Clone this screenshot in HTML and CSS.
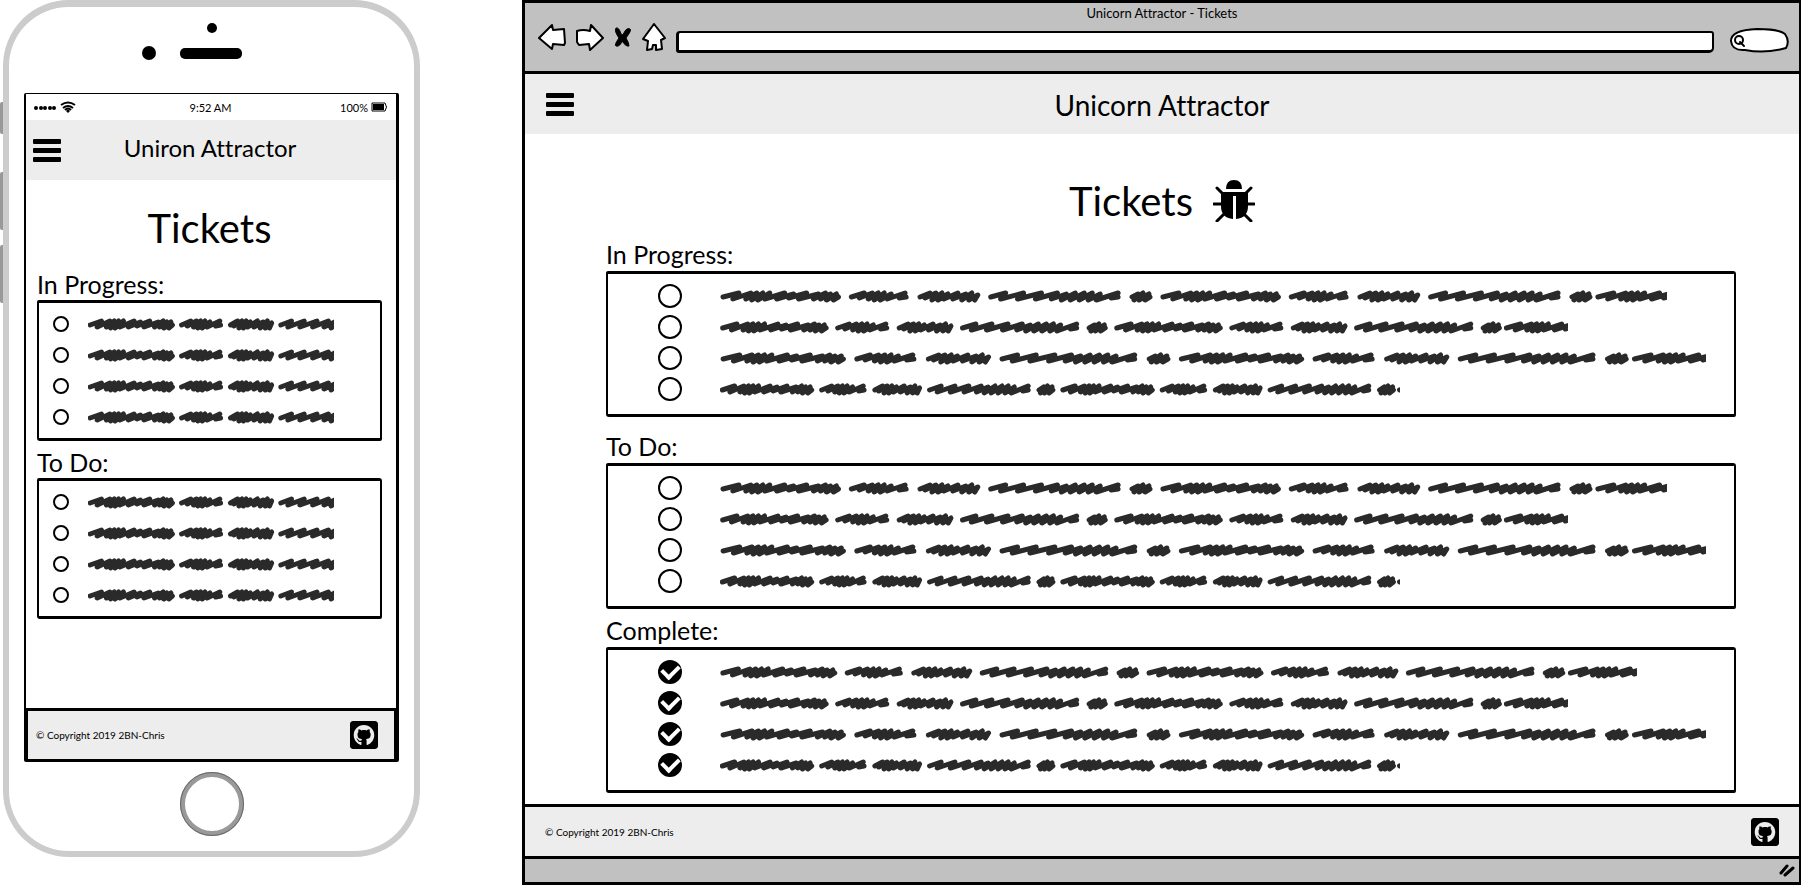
FILE: index.html
```html
<!DOCTYPE html>
<html lang="en">
<head>
<meta charset="utf-8">
<meta name="viewport" content="width=device-width, initial-scale=1">
<title>Unicorn Attractor - Tickets</title>
<link rel="stylesheet" href="styles.css">
</head>
<body>
<svg class="sprite" aria-hidden="true">
  <defs>
    <path id="word" vector-effect="non-scaling-stroke" d="M3 8 L19 4 L13 10 L31 4 L26 10 L37 4 L32 11 L43 4 L38 11 L50 4 L45 10 L65 4 L57 10 L74 5 L69 9 L87 4 L79 10 L99 5 L94 10 L106 4 L101 10 L111 5 L107 11 L117 5 L114 11 L119 8"/>
    <g id="phrase">
      <use href="#word"/>
      <path vector-effect="non-scaling-stroke" d="M132 8 L145 4 L140 9 L153 4 L149 10 L159 4 L155 11 L165 4 L161 11 L172 5 L168 10 L186 4 L180 9 L187 8"/>
      <path vector-effect="non-scaling-stroke" d="M201 8 L211 4 L206 9 L217 4 L213 11 L223 4 L219 11 L229 5 L225 10 L239 4 L234 10 L247 5 L243 11 L253 4 L250 11 L259 6 L256 11"/>
      <path vector-effect="non-scaling-stroke" d="M272 8 L287 4 L282 10 L305 4 L299 10 L323 4 L317 10 L339 4 L333 10 L348 5 L343 11 L357 4 L352 11 L366 4 L361 11 L374 4 L370 11 L382 5 L378 11 L400 4 L393 9 L400 8"/>
      <path vector-effect="non-scaling-stroke" d="M414 8 L420 5 L416 11 L425 4 L421 11 L431 5 L427 11 L432 8"/>
    </g>
    <g id="scribble">
      <use href="#phrase"/>
      <use href="#phrase" x="442"/>
      <use href="#word" x="879"/>
    </g>
    <symbol id="github" viewBox="0 32 448 448">
      <path d="M400 32H48C21.5 32 0 53.5 0 80v352c0 26.5 21.5 48 48 48h352c26.5 0 48-21.5 48-48V80c0-26.5-21.5-48-48-48zM277.300 415.700c-8.400 1.500-11.500-3.700-11.500-8 0-5.400.2-33 .2-55.300 0-15.600-5.200-25.500-11.300-30.700 37-4.100 76-9.200 76-73.100 0-18.200-6.500-27.300-17.100-39 1.700-4.300 7.400-22-1.700-45-13.900-4.300-45.700 17.900-45.700 17.900-13.200-3.700-27.500-5.600-41.600-5.600-14.100 0-28.400 1.900-41.600 5.600 0 0-31.800-22.200-45.700-17.900-9.100 22.900-3.500 40.600-1.700 45-10.600 11.700-15.600 20.800-15.600 39 0 63.600 37.300 69 74.300 73.100-4.800 4.300-9.100 11.700-10.600 22.300-9.500 4.300-33.800 11.700-48.300-13.900-9.100-15.800-25.500-17.100-25.500-17.100-16.200-.2-1.100 10.200-1.100 10.200 10.800 5 18.400 24.200 18.400 24.200 9.700 29.700 56.100 19.700 56.100 19.700 0 13.900.2 36.500.2 40.600 0 4.300-3 9.500-11.500 8-66-22.100-112.200-84.900-112.200-158.300 0-91.800 70.200-161.500 162-161.500S388 165.600 388 257.400c.1 73.400-44.700 136.300-110.700 158.300z"/>
    </symbol>
    <symbol id="bars" viewBox="0 0 28 24">
      <rect y="0" width="28" height="5" rx="1"/><rect y="9" width="28" height="5" rx="1"/><rect y="18" width="28" height="5" rx="1"/>
    </symbol>
  </defs>
</svg>

<div class="stage">
  <section class="phone" aria-label="Mobile view">
    <span class="side-key key-mute"></span>
    <span class="side-key key-up"></span>
    <span class="side-key key-down"></span>
    <div class="bezel">
      <svg class="sensors" viewBox="0 0 100 42" aria-hidden="true">
        <circle cx="70" cy="6" r="5"/><circle cx="7" cy="31" r="7"/><rect x="38" y="26" width="62" height="11" rx="5"/>
      </svg>
    </div>
    <div class="screen">
      <div class="status">
        <span class="signal">
          <svg class="wifi" viewBox="0 0 44 12" aria-hidden="true">
            <circle cx="2" cy="7" r="2"/><circle cx="7" cy="7" r="2"/><circle cx="11" cy="7" r="2"/><circle cx="16" cy="7" r="2"/><circle cx="20" cy="7" r="2"/>
            <path d="M27 4 Q34 -1 41 4 M29 7 Q34 3 39 7 M31 9 Q34 6 37 9" fill="none" stroke="#000" stroke-width="2"/>
            <path d="M32 10 L34 8 L36 10 L34 12Z"/>
          </svg>
        </span>
        <span>9:52 AM</span>
        <span class="power">100%
          <svg class="battery" viewBox="0 0 16 10" aria-hidden="true">
            <path d="M1 1 H14 Q17 5 14 9 H1Z" fill="#fff" stroke="#000"/><rect x="2" y="2" width="11" height="6"/>
          </svg>
        </span>
      </div>
      <header class="app-bar">
        <button class="menu" aria-label="Menu"><svg viewBox="0 0 28 24"><use href="#bars"/></svg></button>
        <span class="brand">Uniron Attractor</span>
      </header>
      <main class="phone-main">
        <h1 class="title">Tickets</h1>
        <h2 class="group-name">In Progress:</h2>
        <ul class="tickets">
          <li class="ticket"><input type="checkbox" class="mark" aria-label="Ticket 1"><svg class="line" viewBox="0 0 347 14" preserveAspectRatio="none"><use href="#scribble"/></svg></li>
          <li class="ticket"><input type="checkbox" class="mark" aria-label="Ticket 2"><svg class="line" viewBox="0 0 347 14" preserveAspectRatio="none"><use href="#scribble"/></svg></li>
          <li class="ticket"><input type="checkbox" class="mark" aria-label="Ticket 3"><svg class="line" viewBox="0 0 347 14" preserveAspectRatio="none"><use href="#scribble"/></svg></li>
          <li class="ticket"><input type="checkbox" class="mark" aria-label="Ticket 4"><svg class="line" viewBox="0 0 347 14" preserveAspectRatio="none"><use href="#scribble"/></svg></li>
        </ul>
        <h2 class="group-name">To Do:</h2>
        <ul class="tickets">
          <li class="ticket"><input type="checkbox" class="mark" aria-label="Ticket 5"><svg class="line" viewBox="0 0 347 14" preserveAspectRatio="none"><use href="#scribble"/></svg></li>
          <li class="ticket"><input type="checkbox" class="mark" aria-label="Ticket 6"><svg class="line" viewBox="0 0 347 14" preserveAspectRatio="none"><use href="#scribble"/></svg></li>
          <li class="ticket"><input type="checkbox" class="mark" aria-label="Ticket 7"><svg class="line" viewBox="0 0 347 14" preserveAspectRatio="none"><use href="#scribble"/></svg></li>
          <li class="ticket"><input type="checkbox" class="mark" aria-label="Ticket 8"><svg class="line" viewBox="0 0 347 14" preserveAspectRatio="none"><use href="#scribble"/></svg></li>
        </ul>
      </main>
      <footer class="foot">
        <span>© Copyright 2019 2BN-Chris</span>
        <a href="#" class="github" aria-label="GitHub"><svg viewBox="0 0 28 28"><use href="#github"/></svg></a>
      </footer>
    </div>
    <button class="home-key" aria-label="Home"></button>
  </section>

  <section class="window" aria-label="Desktop view">
    <div class="chrome">
      <div class="caption">Unicorn Attractor - Tickets</div>
      <div class="toolbar">
        <button class="nav" aria-label="Back"><svg viewBox="0 0 28 28"><path d="M1 15 L14 2 L15 7 L26 6 L27 20 L26 22 L15 21 L14 26Z"/></svg></button>
        <button class="nav" aria-label="Forward"><svg viewBox="0 0 28 28"><path d="M1 8 Q7 6 14 8 L15 2 L27 15 L14 27 L13 21 L3 22 L1 19Z"/></svg></button>
        <button class="nav nav-small" aria-label="Stop"><svg viewBox="0 0 18 28"><path class="solid" d="M2 5 Q5 4 7 11 L9 12 Q12 4 16 6 Q18 7 12 15 Q15 20 15 23 Q12 24 8 18 Q6 24 2 23 Q0 22 5 15 Q0 8 2 5Z"/></svg></button>
        <button class="nav nav-home" aria-label="Home page"><svg viewBox="0 0 24 28"><path d="M12 1 L23 15 L19 17 L20 26 L14 27 V22 L11 22 L10 26 L5 27 L6 18 L1 16Z"/></svg></button>
        <input class="address" type="text" aria-label="Address">
        <label class="search">
          <svg viewBox="0 0 60 26" preserveAspectRatio="none" aria-hidden="true"><path d="M2 14 Q2 3 28 2 Q50 2 56 7 Q61 14 57 21 Q36 27 16 23 Q3 24 2 14Z"/><circle cx="10" cy="13" r="4"/><path d="M11 15 l4 4"/></svg>
          <input type="text" aria-label="Search">
        </label>
      </div>
    </div>
    <header class="app-bar">
      <button class="menu" aria-label="Menu"><svg viewBox="0 0 28 24"><use href="#bars"/></svg></button>
      <span class="brand">Unicorn Attractor</span>
    </header>
    <main class="window-main">
      <h1 class="title">Tickets
        <svg class="bug" viewBox="0 0 42 42" aria-hidden="true">
          <path d="M13 9 Q13 0 21 0 Q29 0 29 9Z"/>
          <path d="M8 12 H35 V26 Q35 38 23 39 V16 H20 V39 Q8 38 8 26Z"/>
          <path d="M4 8 L10 14 M38 8 L32 14 M1 24 H9 M34 24 H41 M4 41 L12 33 M38 41 L30 33" fill="none" stroke="#000" stroke-width="3" stroke-linecap="round"/>
        </svg>
      </h1>
      <h2 class="group-name">In Progress:</h2>
      <ul class="tickets">
        <li class="ticket"><input type="checkbox" class="mark" aria-label="In progress 1"><svg class="line len-long" viewBox="0 0 951 14" preserveAspectRatio="none"><use href="#scribble"/></svg></li>
        <li class="ticket"><input type="checkbox" class="mark" aria-label="In progress 2"><svg class="line len-mid" viewBox="0 0 951 14" preserveAspectRatio="none"><use href="#scribble"/></svg></li>
        <li class="ticket"><input type="checkbox" class="mark" aria-label="In progress 3"><svg class="line" viewBox="0 0 951 14" preserveAspectRatio="none"><use href="#scribble"/></svg></li>
        <li class="ticket"><input type="checkbox" class="mark" aria-label="In progress 4"><svg class="line len-short" viewBox="0 0 883 14" preserveAspectRatio="none"><use href="#scribble"/></svg></li>
      </ul>
      <h2 class="group-name group-todo">To Do:</h2>
      <ul class="tickets">
        <li class="ticket"><input type="checkbox" class="mark" aria-label="To do 1"><svg class="line len-long" viewBox="0 0 951 14" preserveAspectRatio="none"><use href="#scribble"/></svg></li>
        <li class="ticket"><input type="checkbox" class="mark" aria-label="To do 2"><svg class="line len-mid" viewBox="0 0 951 14" preserveAspectRatio="none"><use href="#scribble"/></svg></li>
        <li class="ticket"><input type="checkbox" class="mark" aria-label="To do 3"><svg class="line" viewBox="0 0 951 14" preserveAspectRatio="none"><use href="#scribble"/></svg></li>
        <li class="ticket"><input type="checkbox" class="mark" aria-label="To do 4"><svg class="line len-short" viewBox="0 0 883 14" preserveAspectRatio="none"><use href="#scribble"/></svg></li>
      </ul>
      <h2 class="group-name">Complete:</h2>
      <ul class="tickets">
        <li class="ticket"><input type="checkbox" class="mark" checked aria-label="Complete 1"><svg class="line len-done" viewBox="0 0 951 14" preserveAspectRatio="none"><use href="#scribble"/></svg></li>
        <li class="ticket"><input type="checkbox" class="mark" checked aria-label="Complete 2"><svg class="line len-mid" viewBox="0 0 951 14" preserveAspectRatio="none"><use href="#scribble"/></svg></li>
        <li class="ticket"><input type="checkbox" class="mark" checked aria-label="Complete 3"><svg class="line" viewBox="0 0 951 14" preserveAspectRatio="none"><use href="#scribble"/></svg></li>
        <li class="ticket"><input type="checkbox" class="mark" checked aria-label="Complete 4"><svg class="line len-short" viewBox="0 0 883 14" preserveAspectRatio="none"><use href="#scribble"/></svg></li>
      </ul>
    </main>
    <footer class="foot">
      <span>© Copyright 2019 2BN-Chris</span>
      <a href="#" class="github" aria-label="GitHub"><svg viewBox="0 0 28 28"><use href="#github"/></svg></a>
    </footer>
    <div class="grip-bar">
      <svg class="grip" viewBox="0 0 16 14" aria-hidden="true"><path d="M2 9 L8 2 M6 11 L14 4"/></svg>
    </div>
  </section>
</div>
</body>
</html>
```
FILE: styles.css
```css
* { box-sizing: border-box; }

body {
  margin: 0;
  background: #fff;
  color: #000;
  font-family: Lato, "Open Sans", sans-serif;
  font-variant-ligatures: none;
}

button {
  padding: 0;
  border: 0;
  background: none;
  cursor: pointer;
}

svg { display: block; }

.sprite {
  position: absolute;
  width: 0;
  height: 0;
}

.stage {
  display: flex;
  align-items: flex-start;
  justify-content: space-between;
  gap: 102px;
  padding-left: 3px;
}

/* Phone */
.phone {
  position: relative;
  flex: 0 1 417px;
  display: flex;
  flex-direction: column;
  align-items: center;
  padding: 0 15px 15px;
  border: 6px solid #ccc;
  border-top-width: 7px;
  border-radius: 66px;
}

.side-key {
  position: absolute;
  left: -9px;
  width: 3px;
  background: #999;
  border-radius: 2px 0 0 2px;
}
.key-mute { top: 95px; height: 32px; }
.key-up { top: 165px; height: 58px; }
.key-down { top: 238px; height: 58px; }

.bezel {
  align-self: stretch;
  height: 86px;
  padding: 15px 0 0 118px;
}

.sensors { width: 100px; height: 42px; }

.screen {
  align-self: stretch;
  display: flex;
  flex-direction: column;
  border: solid #000;
  border-width: 1px 3px 0 2px;
  border-radius: 2px;
}

.status {
  display: grid;
  grid-template-columns: 1fr auto 1fr;
  align-items: center;
  height: 26px;
  padding: 0 9px 0 8px;
  font-size: 11px;
}

.power {
  display: flex;
  align-items: center;
  justify-content: flex-end;
  gap: 3px;
}

.wifi { width: 44px; height: 12px; }
.battery { width: 16px; height: 10px; }

.app-bar {
  display: grid;
  grid-template-columns: 1fr auto 1fr;
  align-items: center;
  height: 60px;
  background: #ededed;
  padding: 2px 21px 0;
}
.phone .app-bar { padding: 2px 9px 0 7px; }

.menu { width: 28px; height: 24px; }

.brand { font-size: 28px; }
.phone .brand { font-size: 24px; padding-bottom: 8px; }

.title {
  display: flex;
  align-items: center;
  justify-content: center;
  gap: 20px;
  margin: 0;
  font-size: 40px;
  line-height: 48px;
  font-weight: 400;
}

.group-name {
  margin: 0;
  font-size: 25px;
  line-height: 28px;
  font-weight: 400;
}

.tickets {
  display: grid;
  margin: 0;
  list-style: none;
  border: solid #000;
  border-width: 3px 2px;
  border-radius: 2px 3px 2px 3px;
}

.ticket {
  display: grid;
  grid-template-columns: auto 1fr;
  align-items: center;
}

.mark {
  appearance: none;
  display: grid;
  place-items: center;
  margin: 0;
  border: 2px solid #000;
  border-radius: 50%;
  background: #fff;
}
.mark:checked { background: #000; }
.mark:checked::before {
  content: "";
  width: 13px;
  height: 8px;
  border: solid #fff;
  border-width: 0 0 4px 4px;
  transform: translateY(-2px) rotate(-45deg);
}

.line {
  width: 100%;
  height: 14px;
  fill: none;
  stroke: #2a2a2a;
  stroke-width: 5;
  stroke-linecap: round;
  stroke-linejoin: round;
}
.len-long { width: 96%; }
.len-done { width: 93%; }
.len-mid { width: 86%; }
.len-short { width: 69%; }

.phone-main { padding: 24px 14px 82px 11px; }
.phone-main .title { margin-bottom: 18px; }
.phone-main .tickets {
  gap: 15px;
  padding: 13px 46px 13px 14px;
  margin: 2px 0 7px;
  min-height: 140px;
}
.phone-main .ticket { gap: 19px; height: 16px; }
.phone-main .mark { width: 16px; height: 16px; }

.foot {
  display: flex;
  align-items: center;
  justify-content: space-between;
  background: #ededed;
  border: solid #000;
  border-width: 3px 2px;
  height: 54px;
  padding: 0 16px 0 8px;
  font-size: 10px;
}

.github svg { width: 28px; height: 28px; }

.home-key {
  width: 64px;
  height: 64px;
  margin-top: 10px;
  border: 5px solid #999;
  border-radius: 50%;
  outline: 1px solid #666;
  outline-offset: -1px;
}

/* Browser window */
.window {
  flex: 1 1 0;
  display: flex;
  flex-direction: column;
  min-height: 100vh;
  border: 3px solid #000;
  border-width: 3px 2px 3px 3px;
}

.chrome {
  height: 71px;
  background: #c1c1c1;
  border-bottom: 3px solid #000;
}

.caption {
  text-align: center;
  font-size: 13px;
  line-height: 20px;
}

.toolbar {
  display: flex;
  align-items: flex-end;
  height: 30px;
  padding: 0 10px 0 13px;
}

.nav { flex: none; width: 28px; height: 28px; margin: 0 10px 2px 0; }
.nav svg { width: 100%; height: 28px; fill: #fff; stroke: #000; stroke-width: 2; stroke-linejoin: round; }
.nav .solid { fill: #000; stroke-width: 1; }
.nav-small { width: 18px; }
.nav-home { width: 24px; }

.address {
  flex: 1;
  min-width: 0;
  height: 22px;
  margin-right: 15px;
  border: solid #000;
  border-width: 2px 2px 3px 3px;
  border-radius: 4px 3px 5px 3px;
  background: #fff;
}

.search {
  position: relative;
  width: 60px;
  height: 26px;
}
.search svg {
  width: 60px;
  height: 26px;
  fill: #fff;
  stroke: #000;
  stroke-width: 2;
  stroke-linecap: round;
}
.search input {
  position: absolute;
  inset: 4px 6px 4px 18px;
  width: 34px;
  border: 0;
  padding: 0;
  background: none;
}

.window-main {
  flex: 1;
  display: flex;
  flex-direction: column;
  padding: 43px 63px 4px 81px;
}
.window-main .title { margin: 0 0 15px -18px; }
.bug { width: 42px; height: 42px; }
.window-main .tickets {
  gap: 7px;
  padding: 10px 28px 13px 50px;
  margin: 3px 0 7px;
  min-height: 146px;
}
.window-main .group-todo { margin-top: 8px; }
.window-main .ticket { gap: 38px; height: 24px; }
.window-main .mark { width: 24px; height: 24px; }

.window .foot {
  border-width: 3px 0;
  height: 55px;
  padding: 0 20px;
}

.grip-bar {
  display: flex;
  justify-content: flex-end;
  align-items: center;
  height: 23px;
  padding-right: 4px;
  background: #c1c1c1;
}

.grip {
  width: 16px;
  height: 14px;
  fill: none;
  stroke: #000;
  stroke-width: 3;
  stroke-linecap: round;
}
```
